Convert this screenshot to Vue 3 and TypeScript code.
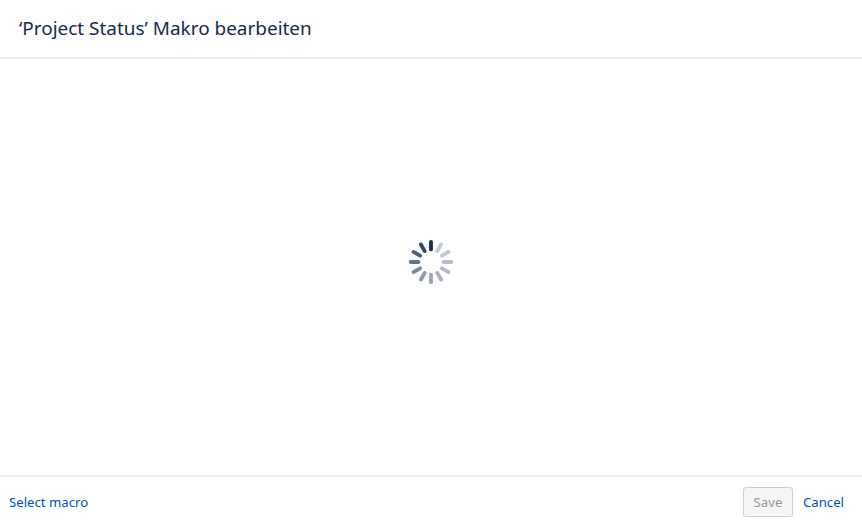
<script setup lang="ts">
const levels: number[] = [1, 0.24, 0.26, 0.3, 0.33, 0.37, 0.42, 0.48, 0.56, 0.66, 0.76, 0.88];
const spokes = levels.map((opacity, i) => ({ angle: i * 30, opacity }));
</script>

<template>
  <div class="dialog">
    <header class="head">
      <h1 class="title">‘Project Status’ Makro bearbeiten</h1>
    </header>
    <main class="body">
      <svg class="spinner" width="46" height="46" viewBox="-23 -23 46 46" role="img" aria-label="Loading">
        <line
          v-for="s in spokes"
          :key="s.angle"
          x1="0"
          y1="-12.6"
          x2="0"
          y2="-20.2"
          stroke="#172b4d"
          stroke-width="3.8"
          stroke-linecap="round"
          :opacity="s.opacity"
          :transform="`rotate(${s.angle})`"
        />
      </svg>
    </main>
    <footer class="foot">
      <a class="link" href="#">Select macro</a>
      <div class="actions">
        <button class="save" type="button" disabled>Save</button>
        <a class="link" href="#">Cancel</a>
      </div>
    </footer>
  </div>
</template>

<style>
html, body { margin: 0; background: #fff; }
</style>

<style scoped>
.dialog {
  width: 862px;
  height: 525px;
  display: flex;
  flex-direction: column;
  box-sizing: border-box;
  font-family: "Noto Sans", "Open Sans", sans-serif;
  background: #fff;
  overflow: hidden;
}
.head {
  height: 59px;
  box-sizing: border-box;
  border-bottom: 2px solid #ebecf0;
  padding-left: 19px;
  padding-bottom: 2px;
  display: flex;
  align-items: center;
}
.title {
  margin: 0;
  font-size: 18.95px;
  font-weight: 400;
  color: #172b4d;
}
.body {
  flex: 1;
  display: flex;
  align-items: center;
  justify-content: center;
  padding-bottom: 10px;
}
.foot {
  height: 50px;
  box-sizing: border-box;
  border-top: 2px solid #ebecf0;
  padding: 10px 18px 0 9px;
  display: flex;
  align-items: flex-start;
  justify-content: space-between;
}
.link {
  color: #0052cc;
  text-decoration: none;
  font-size: 13.2px;
  line-height: 30px;
}
.actions {
  display: flex;
  align-items: center;
  gap: 10px;
}
.save {
  width: 50px;
  height: 30px;
  padding: 0;
  box-sizing: border-box;
  border: 1px solid #cfcfcf;
  border-radius: 3px;
  background: #f5f5f5;
  color: #999;
  font: inherit;
  font-size: 13.2px;
}
</style>
